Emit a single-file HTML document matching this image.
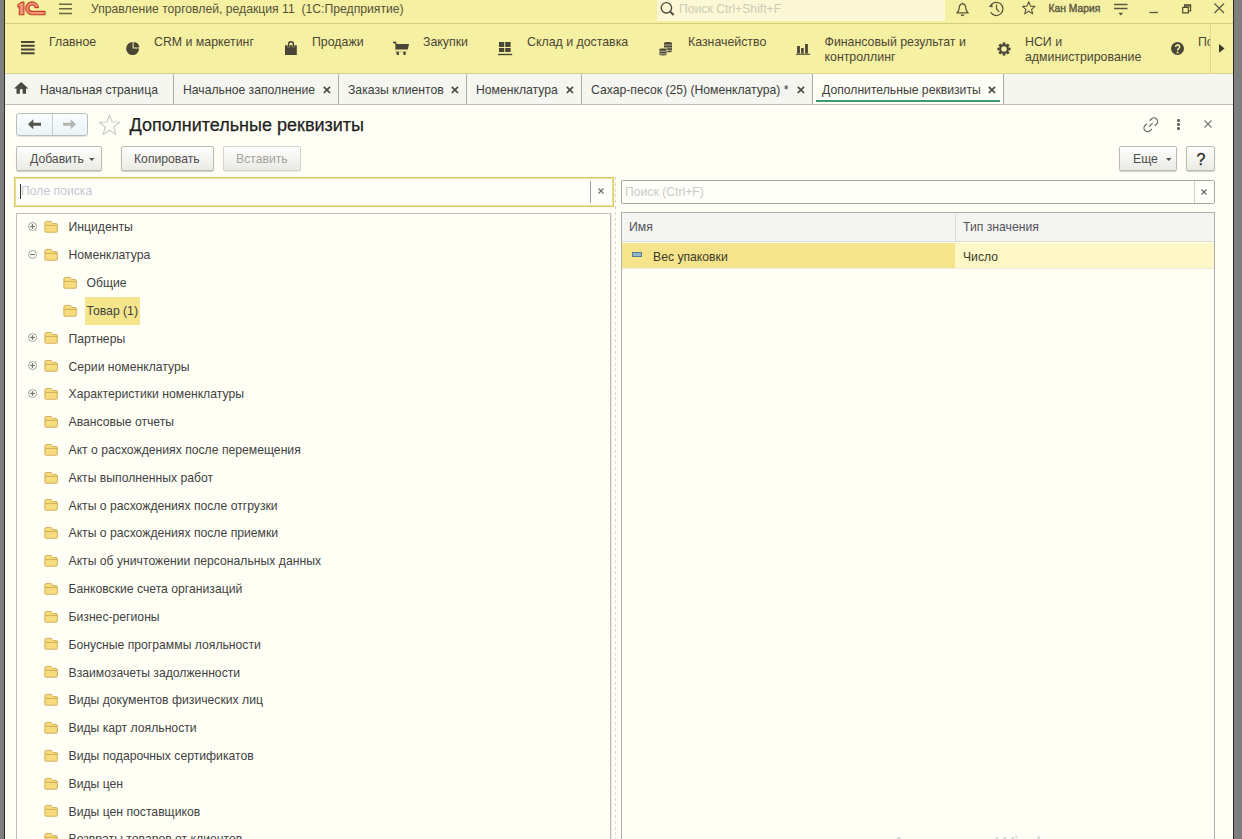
<!DOCTYPE html>
<html><head><meta charset="utf-8">
<style>
*{margin:0;padding:0;box-sizing:border-box}
html,body{width:1242px;height:839px;overflow:hidden;background:#7f7f7f;font-family:"Liberation Sans",sans-serif;font-size:12.2px;color:#333}
.a{position:absolute;white-space:nowrap}
svg.a{overflow:visible}
#win{position:absolute;left:4px;top:0;width:1230px;height:839px;background:#fffff6;border-left:1px solid #2b2b2b;border-right:1px solid #2b2b2b;overflow:hidden}
#title{position:absolute;left:0;top:0;width:1228px;height:24px;background:#f6f0a2;border-bottom:1px solid #d6cd7c}
#sect{position:absolute;left:0;top:24px;width:1228px;height:50px;background:#f6f0a2;border-bottom:1px solid #ddd28e}
#tabs{position:absolute;left:0;top:74px;width:1228px;height:31px;background:#f5f6ef;border-bottom:1px solid #bdbdb5}
.tab{position:absolute;top:0;height:30px;border-right:1px solid #aeaea6}
.tt{position:absolute;top:8.5px;color:#3c3c3c}
.st{position:absolute;color:#4a4636;line-height:15px;font-size:12.35px}
.btn{position:absolute;height:25px;border:1px solid #bdbdb5;border-radius:2px;background:linear-gradient(#fefefc,#ebebe5);box-shadow:0 1px 1px rgba(0,0,0,.2);color:#4d4d4d}
.btn span{position:absolute;top:5px}
.ti{position:absolute;color:#424242}
.ic{fill:#4a4636}
</style></head><body>
<div id="win">
  <div id="title">
    <!-- 1C logo -->
    <svg class="a" style="left:12px;top:1px" width="30" height="16" viewBox="0 0 30 16">
      <path d="M0.9 3.6 L4.6 1.1 H6.9 V13.7 H2.3 V5.5 L0.9 6 Z" fill="#f09478" stroke="#c23d24" stroke-width="1.1" stroke-linejoin="round"/>
      <path d="M21.4 6.6 A6.4 6.4 0 1 0 15 13.7 H28 V10.4 H15 A3.2 3.2 0 1 1 18.2 6.6 Z" fill="#f09478" stroke="#c23d24" stroke-width="1.1" stroke-linejoin="round"/>
    </svg>
    <!-- hamburger -->
    <svg class="a" style="left:54px;top:3px" width="14" height="12" viewBox="0 0 14 12">
      <path d="M0 1.2 H13 M0 5.7 H13 M0 10.5 H13" stroke="#6a6840" stroke-width="1.5"/>
    </svg>
    <div class="a" style="left:86px;top:2px;color:#55533a">Управление торговлей, редакция 11&nbsp; (1С:Предприятие)</div>
    <div class="a" style="left:652px;top:0;width:288px;height:21px;background:#fcf8d6"></div>
    <svg class="a" style="left:655px;top:1px" width="16" height="16" viewBox="0 0 16 16">
      <circle cx="6.4" cy="6.8" r="5.2" fill="none" stroke="#4c4a3c" stroke-width="1.4"/>
      <path d="M10.2 10.6 L13.6 14" stroke="#4c4a3c" stroke-width="2"/>
    </svg>
    <div class="a" style="left:674px;top:2px;color:#cdccb4">Поиск Ctrl+Shift+F</div>
    <!-- bell -->
    <svg class="a" style="left:951px;top:2px" width="15" height="15" viewBox="0 0 15 15">
      <path d="M6.5 0.6 V1.6" stroke="#5a5840" stroke-width="1.4"/>
      <path d="M6.5 1.8 C4 1.8 3.3 3.8 3.2 6 C3.1 8.2 2.4 9.6 0.8 10.9 H12.2 C10.6 9.6 9.9 8.2 9.8 6 C9.7 3.8 9 1.8 6.5 1.8 Z" fill="none" stroke="#5a5840" stroke-width="1.3" stroke-linejoin="round"/>
      <path d="M4.6 12.6 H8.4 A1.9 1.6 0 0 1 4.6 12.6 Z" fill="#5a5840"/>
    </svg>
    <!-- history -->
    <svg class="a" style="left:983px;top:0.5px" width="17" height="16" viewBox="0 0 17 16">
      <path d="M2.6 4.6 A6.6 6.6 0 1 1 2.7 11.4" fill="none" stroke="#5a5840" stroke-width="1.3"/>
      <path d="M0.6 5.6 L4.2 2.6 L4.6 6.6 Z" fill="#5a5840"/>
      <path d="M8.5 3.6 V7.9 L11.4 10.8" fill="none" stroke="#5a5840" stroke-width="1.2"/>
    </svg>
    <!-- star -->
    <svg class="a" style="left:1016.5px;top:1.2px" width="14" height="14" viewBox="0 0 15 15">
      <path d="M7.2 0.8 L9.1 5.5 L13.9 5.7 L10.2 8.9 L11.5 13.8 L7.2 11 L2.9 13.8 L4.2 8.9 L0.5 5.7 L5.3 5.5 Z" fill="none" stroke="#5a5840" stroke-width="1.2" stroke-linejoin="round"/>
    </svg>
    <div class="a" style="left:1043.5px;top:2.5px;font-size:10.3px;color:#5c5a44;-webkit-text-stroke:0.4px #5c5a44">Кан Мария</div>
    <!-- filter -->
    <svg class="a" style="left:1109px;top:2px" width="15" height="15" viewBox="0 0 15 15">
      <path d="M0 2.5 H13.5 M0 6.5 H13.5" stroke="#5a5840" stroke-width="1.3"/>
      <path d="M4.3 10.8 H9.2 L6.75 13.6 Z" fill="#5a5840"/>
    </svg>
    <svg class="a" style="left:1144px;top:11px" width="10" height="3" viewBox="0 0 10 3"><path d="M0.5 1.5 H9" stroke="#5a5840" stroke-width="1.3"/></svg>
    <svg class="a" style="left:1177px;top:3.5px" width="10" height="10" viewBox="0 0 10 10">
      <path d="M2.6 0.9 H8.6 V3.4 H2.6 Z" fill="#8a8660"/>
      <path d="M0.7 3.3 H6.3 V8.9 H0.7 Z" fill="none" stroke="#4f4c30" stroke-width="1.2"/>
      <path d="M2.6 3.3 V0.9 H8.6 V6.9 H6.3" fill="none" stroke="#4f4c30" stroke-width="1.2"/>
    </svg>
    <svg class="a" style="left:1209px;top:3px" width="11" height="11" viewBox="0 0 11 11"><path d="M0.5 0.5 L10 10 M10 0.5 L0.5 10" stroke="#5a5840" stroke-width="1.2"/></svg>
  </div>
  <div id="sect">
    <svg class="a" style="left:16px;top:17px" width="14" height="14" viewBox="0 0 14 14"><path d="M0 1 H13.6 M0 4.7 H13.6 M0 8.6 H13.6 M0 12.3 H13.6" stroke="#4a4636" stroke-width="2"/></svg>
    <div class="st" style="left:44px;top:11px">Главное</div>
    <svg class="a" style="left:121px;top:18px" width="14" height="14" viewBox="0 0 14 14">
      <path d="M6.6 0.1 A6.5 6.5 0 1 0 13.1 6.6 H6.6 Z" class="ic"/>
      <path d="M7.6 0 A6.3 6.3 0 0 1 13.4 5.6 H7.6 Z" class="ic"/>
    </svg>
    <div class="st" style="left:149px;top:11px">CRM и маркетинг</div>
    <svg class="a" style="left:280px;top:17px" width="13" height="15" viewBox="0 0 13 15">
      <path d="M3.6 6 V3.2 A2.4 2.4 0 0 1 8.4 3.2 V6" fill="none" stroke="#4a4636" stroke-width="1.5"/>
      <path d="M0 4.2 H2.6 V6.3 H4.6 V4.2 H7.4 V6.3 H9.4 V4.2 H11.8 V14 H0 Z" class="ic"/>
    </svg>
    <div class="st" style="left:307px;top:11px">Продажи</div>
    <svg class="a" style="left:388px;top:18px" width="17" height="14" viewBox="0 0 17 14">
      <path d="M0 0.6 H2.6 V2.2" fill="none" stroke="#4a4636" stroke-width="1.5"/>
      <path d="M2.4 1.9 H16 L14.8 7.6 H2.4 Z" class="ic"/>
      <path d="M3.4 9.8 H6 L5.8 13 H3.7 Z M10.2 9.8 H12.8 L12.6 13 H10.5 Z" class="ic"/>
      <path d="M2.5 7.6 V9.8 H13.6" fill="none" stroke="#4a4636" stroke-width="0.6" opacity=".4"/>
    </svg>
    <div class="st" style="left:418px;top:11px">Закупки</div>
    <svg class="a" style="left:493px;top:18px" width="15" height="14" viewBox="0 0 15 14">
      <path d="M1 0 H6.2 V5 H1 Z M7.2 0 H12.6 V5 H7.2 Z M1 6 H6.2 V10 H1 Z M7.2 6 H12.6 V10 H7.2 Z" class="ic"/>
      <path d="M0 11.8 H14.2 V13.2 H0 Z" class="ic"/>
    </svg>
    <div class="st" style="left:522px;top:11px">Склад и доставка</div>
    <svg class="a" style="left:654px;top:17px" width="15" height="16" viewBox="0 0 15 16">
      <g>
        <path d="M5 2.3 A4 1.3 0 0 1 13 2.3 V10 A4 1.3 0 0 1 5 10 Z" fill="#4a4636"/>
        <path d="M5.2 4 H12.8 M5.2 6.8 H12.8 M5.2 9.4 H12.8" stroke="#c9c4a0" stroke-width="0.9"/>
        <path d="M0 8.3 A4 1.3 0 0 1 8 8.3 V13.6 A4 1.3 0 0 1 0 13.6 Z" fill="#4a4636" stroke="#f6f0a2" stroke-width="0.8"/>
        <path d="M0.3 10.2 H7.7 M0.3 12.8 H7.7" stroke="#c9c4a0" stroke-width="0.9"/>
      </g>
    </svg>
    <div class="st" style="left:683px;top:11px">Казначейство</div>
    <svg class="a" style="left:791px;top:20px" width="15" height="12" viewBox="0 0 15 12">
      <path d="M1.1 2 H3.9 V9.5 H1.1 Z M5.1 4 H7.7 V9.5 H5.1 Z M9.1 0 H11.9 V9.5 H9.1 Z" class="ic"/>
      <path d="M0 9.6 H14 V11 H0 Z" class="ic" opacity=".8"/>
    </svg>
    <div class="st" style="left:819.5px;top:10.5px">Финансовый результат и<br>контроллинг</div>
    <svg class="a" style="left:992px;top:18px" width="14" height="14" viewBox="-7 -7 14 14">
      <g class="ic">
        <path d="M-1.3 -6.6 H1.3 V-4.6 H-1.3 Z" transform="rotate(0)"/>
        <path d="M-1.3 -6.6 H1.3 V-4.6 H-1.3 Z" transform="rotate(45)"/>
        <path d="M-1.3 -6.6 H1.3 V-4.6 H-1.3 Z" transform="rotate(90)"/>
        <path d="M-1.3 -6.6 H1.3 V-4.6 H-1.3 Z" transform="rotate(135)"/>
        <path d="M-1.3 -6.6 H1.3 V-4.6 H-1.3 Z" transform="rotate(180)"/>
        <path d="M-1.3 -6.6 H1.3 V-4.6 H-1.3 Z" transform="rotate(225)"/>
        <path d="M-1.3 -6.6 H1.3 V-4.6 H-1.3 Z" transform="rotate(270)"/>
        <path d="M-1.3 -6.6 H1.3 V-4.6 H-1.3 Z" transform="rotate(315)"/>
      </g>
      <circle cx="0" cy="0" r="3.9" fill="none" stroke="#4a4636" stroke-width="2.2"/>
    </svg>
    <div class="st" style="left:1020px;top:10.5px">НСИ и<br>администрирование</div>
    <svg class="a" style="left:1166px;top:18px" width="14" height="14" viewBox="0 0 14 14">
      <circle cx="6.5" cy="6.5" r="6.5" fill="#4a4636"/>
      <path d="M4.6 5 A2 2 0 1 1 7.6 6.6 C6.8 7.1 6.6 7.5 6.6 8.6" fill="none" stroke="#f6f0a2" stroke-width="1.6"/>
      <circle cx="6.6" cy="10.4" r="1" fill="#f6f0a2"/>
    </svg>
    <div class="a" style="left:1170px;top:0;width:35px;height:51px;overflow:hidden"><div class="st" style="left:23px;top:11px">Подключаемое</div></div>
    <div class="a" style="left:1205px;top:0;width:1px;height:51px;background:#e0d68c"></div>
    <svg class="a" style="left:1214px;top:20px" width="6" height="9" viewBox="0 0 6 9"><path d="M0 0 L5.5 4.4 L0 8.8 Z" fill="#3a3828"/></svg>
  </div>
  <div id="tabs">
    <div class="tab" style="left:0;width:169px"><div class="tt" style="left:35px">Начальная страница</div>
      <svg class="a" style="left:9px;top:8px" width="15" height="12" viewBox="0 0 15 12"><path d="M7.2 0 L14.4 6.6 H12 V11.8 H8.6 V7.2 H5.9 V11.8 H2.5 V6.6 H0 Z" fill="#4a4a44"/></svg>
    </div>
    <div class="tab" style="left:169px;width:165px"><div class="tt" style="left:9px">Начальное заполнение</div><svg class="a" style="left:149px;top:12px" width="8" height="8" viewBox="0 0 8 8"><path d="M0.8 0.8 L7 7 M7 0.8 L0.8 7" stroke="#4a4a44" stroke-width="1.7"/></svg></div>
    <div class="tab" style="left:334px;width:128px"><div class="tt" style="left:9px">Заказы клиентов</div><svg class="a" style="left:112px;top:12px" width="8" height="8" viewBox="0 0 8 8"><path d="M0.8 0.8 L7 7 M7 0.8 L0.8 7" stroke="#4a4a44" stroke-width="1.7"/></svg></div>
    <div class="tab" style="left:462px;width:115px"><div class="tt" style="left:9px">Номенклатура</div><svg class="a" style="left:99px;top:12px" width="8" height="8" viewBox="0 0 8 8"><path d="M0.8 0.8 L7 7 M7 0.8 L0.8 7" stroke="#4a4a44" stroke-width="1.7"/></svg></div>
    <div class="tab" style="left:577px;width:231px"><div class="tt" style="left:9px">Сахар-песок (25) (Номенклатура) *</div><svg class="a" style="left:215px;top:12px" width="8" height="8" viewBox="0 0 8 8"><path d="M0.8 0.8 L7 7 M7 0.8 L0.8 7" stroke="#4a4a44" stroke-width="1.7"/></svg></div>
    <div class="tab" style="left:808px;width:191px;background:#fffff6"><div class="tt" style="left:9px">Дополнительные реквизиты</div><svg class="a" style="left:175px;top:12px" width="8" height="8" viewBox="0 0 8 8"><path d="M0.8 0.8 L7 7 M7 0.8 L0.8 7" stroke="#4a4a44" stroke-width="1.7"/></svg>
      <div class="a" style="left:3px;top:26px;width:184px;height:2px;background:#3f9878"></div>
    </div>
  </div>

  <!-- content header -->
  <div class="a" style="left:11px;top:113px;width:72px;height:23px;border:1px solid #b9bdbc;border-radius:3px;background:linear-gradient(#fbfdfd,#e9f4f8);box-shadow:0 1px 1px rgba(0,0,0,.12)"></div>
  <div class="a" style="left:47px;top:114px;width:1px;height:21px;background:#c8cccc"></div>
  <svg class="a" style="left:23px;top:119px" width="14" height="11" viewBox="0 0 14 11"><path d="M0 5.3 L5.3 0.3 V3.8 H13 V6.8 H5.3 V10.3 Z" fill="#4f544c"/></svg>
  <svg class="a" style="left:57px;top:119px" width="14" height="11" viewBox="0 0 14 11"><path d="M14 5.3 L8.7 0.3 V3.8 H1 V6.8 H8.7 V10.3 Z" fill="#b3b7b2"/></svg>
  <svg class="a" style="left:93px;top:114px" width="23" height="22" viewBox="0 0 23 22">
    <path d="M11.5 1 L14.2 8 L21.8 8.3 L15.8 13 L17.9 20.5 L11.5 16.2 L5.1 20.5 L7.2 13 L1.2 8.3 L8.8 8 Z" fill="none" stroke="#c5cdcd" stroke-width="1.1" stroke-linejoin="round"/>
  </svg>
  <div class="a" style="left:124.5px;top:115px;font-size:18px;color:#1e1e1e;-webkit-text-stroke:0.25px #1e1e1e">Дополнительные реквизиты</div>
  <svg class="a" style="left:1137.5px;top:117px" width="16" height="16" viewBox="0 0 16 16">
    <path d="M6.65 3.75 L8.45 1.95 A3.6 3.6 0 0 1 13.55 7.05 L11.75 8.85" fill="none" stroke="#6f6f6f" stroke-width="1.3"/>
    <path d="M3.85 6.75 L2.05 8.55 A3.6 3.6 0 0 0 7.15 13.65 L8.95 11.85" fill="none" stroke="#6f6f6f" stroke-width="1.3"/>
    <path d="M6.1 9.9 L9.6 6.1" stroke="#6f6f6f" stroke-width="1.3"/>
  </svg>
  <div class="a" style="left:1172px;top:119px;width:2.6px;height:2.6px;border-radius:50%;background:#666"></div>
  <div class="a" style="left:1172px;top:123px;width:2.6px;height:2.6px;border-radius:50%;background:#666"></div>
  <div class="a" style="left:1172px;top:127px;width:2.6px;height:2.6px;border-radius:50%;background:#666"></div>
  <svg class="a" style="left:1199px;top:120px" width="8" height="8" viewBox="0 0 8 8"><path d="M0.5 0.5 L7.5 7.5 M7.5 0.5 L0.5 7.5" stroke="#777" stroke-width="1.1"/></svg>

  <!-- buttons -->
  <div class="btn" style="left:11px;top:146px;width:86px"><span style="left:13px">Добавить</span><svg class="a" style="left:72px;top:11px" width="6" height="4" viewBox="0 0 6 4"><path d="M0 0 H5.5 L2.75 3 Z" fill="#555"/></svg></div>
  <div class="btn" style="left:116px;top:146px;width:93px"><span style="left:12px">Копировать</span></div>
  <div class="btn" style="left:218px;top:146px;width:78px;color:#a3a3a0;border-color:#d4d4cc;box-shadow:0 1px 1px rgba(0,0,0,.08)"><span style="left:12px">Вставить</span></div>
  <div class="btn" style="left:1114px;top:146px;width:58px"><span style="left:13px">Еще</span><svg class="a" style="left:46px;top:11px" width="6" height="4" viewBox="0 0 6 4"><path d="M0 0 H5.5 L2.75 3 Z" fill="#555"/></svg></div>
  <div class="btn" style="left:1181px;top:146px;width:29px"><span style="left:9.5px;top:3.5px;font-size:16px;color:#2a2a2a;-webkit-text-stroke:0.3px #2a2a2a">?</span></div>

  <!-- left search -->
  <div class="a" style="left:9px;top:177px;width:600px;height:30px;border:1px solid #dbcb62;box-shadow:inset 0 0 0 1px #ebe096;background:#fffffa"></div>
  <div class="a" style="left:15px;top:184px;width:1px;height:15px;background:#333"></div>
  <div class="a" style="left:16px;top:184px;color:#c9c5d3">Поле поиска</div>
  <div class="a" style="left:585px;top:181px;width:1px;height:22px;background:#9c9c98"></div>
  <svg class="a" style="left:593px;top:188px" width="6" height="6" viewBox="0 0 6 6"><path d="M0.5 0.5 L5.5 5.5 M5.5 0.5 L0.5 5.5" stroke="#6a6a6a" stroke-width="1.1"/></svg>
  <!-- right search -->
  <div class="a" style="left:616px;top:180px;width:594px;height:24px;border:1px solid #a9a9a2;border-radius:2px;background:#fffffa"></div>
  <div class="a" style="left:620px;top:185px;color:#cbcbc5">Поиск (Ctrl+F)</div>
  <div class="a" style="left:1189px;top:181px;width:1px;height:22px;background:#cfcfc8"></div>
  <svg class="a" style="left:1196px;top:189px" width="6" height="6" viewBox="0 0 6 6"><path d="M0.5 0.5 L5.5 5.5 M5.5 0.5 L0.5 5.5" stroke="#666" stroke-width="1.1"/></svg>

  <!-- splitter -->
  <div class="a" style="left:610px;top:177px;width:1px;height:663px;background:repeating-linear-gradient(#d8d8d0 0 3px,transparent 3px 5.8px)"></div>

  <!-- tree box -->
  <div class="a" style="left:11px;top:213px;width:595px;height:640px;border:1px solid #c0c0b8;box-shadow:1px 1px 0 #e6e6de;background:#fffff6"></div>
  <svg class="a" style="left:23px;top:222.0px" width="10" height="10" viewBox="0 0 10 10"><circle cx="4.5" cy="4.5" r="4" fill="none" stroke="#a3a3a0" stroke-width="1"/><path d="M2.1 4.5 H6.9" stroke="#777" stroke-width="1.2"/><path d="M4.5 2.1 V6.9" stroke="#777" stroke-width="1.2"/></svg>
<svg class="a" style="left:38px;top:220.1px" width="16" height="14" viewBox="0 0 16 14"><path d="M1.9 3 Q1.9 1.4 3.5 1.4 H7.3 Q8.4 1.4 9.2 2.5 Q9.8 3.6 10.9 3.6 H13.3 Q14.3 3.6 14.3 4.6 V11.2 Q14.3 12.2 13.3 12.2 H2.9 Q1.9 12.2 1.9 11.2 Z" fill="#f7dc7e" stroke="#cfad5c" stroke-width="1"/><path d="M2.2 5.4 H14" stroke="#d2ae58" stroke-width="1"/></svg>
<div class="ti a" style="left:63.5px;top:220.4px">Инциденты</div>
<svg class="a" style="left:23px;top:250.0px" width="10" height="10" viewBox="0 0 10 10"><circle cx="4.5" cy="4.5" r="4" fill="none" stroke="#a3a3a0" stroke-width="1"/><path d="M2.1 4.5 H6.9" stroke="#777" stroke-width="1.2"/></svg>
<svg class="a" style="left:38px;top:247.9px" width="16" height="14" viewBox="0 0 16 14"><path d="M1.9 3 Q1.9 1.4 3.5 1.4 H7.3 Q8.4 1.4 9.2 2.5 Q9.8 3.6 10.9 3.6 H13.3 Q14.3 3.6 14.3 4.6 V11.2 Q14.3 12.2 13.3 12.2 H2.9 Q1.9 12.2 1.9 11.2 Z" fill="#f7dc7e" stroke="#cfad5c" stroke-width="1"/><path d="M2.2 5.4 H14" stroke="#d2ae58" stroke-width="1"/></svg>
<div class="ti a" style="left:63.5px;top:248.2px">Номенклатура</div>
<svg class="a" style="left:56.5px;top:275.7px" width="16" height="14" viewBox="0 0 16 14"><path d="M1.9 3 Q1.9 1.4 3.5 1.4 H7.3 Q8.4 1.4 9.2 2.5 Q9.8 3.6 10.9 3.6 H13.3 Q14.3 3.6 14.3 4.6 V11.2 Q14.3 12.2 13.3 12.2 H2.9 Q1.9 12.2 1.9 11.2 Z" fill="#f7dc7e" stroke="#cfad5c" stroke-width="1"/><path d="M2.2 5.4 H14" stroke="#d2ae58" stroke-width="1"/></svg>
<div class="ti a" style="left:81.5px;top:276.0px">Общие</div>
<svg class="a" style="left:56.5px;top:303.6px" width="16" height="14" viewBox="0 0 16 14"><path d="M1.9 3 Q1.9 1.4 3.5 1.4 H7.3 Q8.4 1.4 9.2 2.5 Q9.8 3.6 10.9 3.6 H13.3 Q14.3 3.6 14.3 4.6 V11.2 Q14.3 12.2 13.3 12.2 H2.9 Q1.9 12.2 1.9 11.2 Z" fill="#f7dc7e" stroke="#cfad5c" stroke-width="1"/><path d="M2.2 5.4 H14" stroke="#d2ae58" stroke-width="1"/></svg>
<div class="a" style="left:80px;top:297.2px;width:55px;height:27.5px;background:#f5e68c"></div>
<div class="ti a" style="left:81.5px;top:303.9px">Товар (1)</div>
<svg class="a" style="left:23px;top:333.0px" width="10" height="10" viewBox="0 0 10 10"><circle cx="4.5" cy="4.5" r="4" fill="none" stroke="#a3a3a0" stroke-width="1"/><path d="M2.1 4.5 H6.9" stroke="#777" stroke-width="1.2"/><path d="M4.5 2.1 V6.9" stroke="#777" stroke-width="1.2"/></svg>
<svg class="a" style="left:38px;top:331.4px" width="16" height="14" viewBox="0 0 16 14"><path d="M1.9 3 Q1.9 1.4 3.5 1.4 H7.3 Q8.4 1.4 9.2 2.5 Q9.8 3.6 10.9 3.6 H13.3 Q14.3 3.6 14.3 4.6 V11.2 Q14.3 12.2 13.3 12.2 H2.9 Q1.9 12.2 1.9 11.2 Z" fill="#f7dc7e" stroke="#cfad5c" stroke-width="1"/><path d="M2.2 5.4 H14" stroke="#d2ae58" stroke-width="1"/></svg>
<div class="ti a" style="left:63.5px;top:331.7px">Партнеры</div>
<svg class="a" style="left:23px;top:361.0px" width="10" height="10" viewBox="0 0 10 10"><circle cx="4.5" cy="4.5" r="4" fill="none" stroke="#a3a3a0" stroke-width="1"/><path d="M2.1 4.5 H6.9" stroke="#777" stroke-width="1.2"/><path d="M4.5 2.1 V6.9" stroke="#777" stroke-width="1.2"/></svg>
<svg class="a" style="left:38px;top:359.2px" width="16" height="14" viewBox="0 0 16 14"><path d="M1.9 3 Q1.9 1.4 3.5 1.4 H7.3 Q8.4 1.4 9.2 2.5 Q9.8 3.6 10.9 3.6 H13.3 Q14.3 3.6 14.3 4.6 V11.2 Q14.3 12.2 13.3 12.2 H2.9 Q1.9 12.2 1.9 11.2 Z" fill="#f7dc7e" stroke="#cfad5c" stroke-width="1"/><path d="M2.2 5.4 H14" stroke="#d2ae58" stroke-width="1"/></svg>
<div class="ti a" style="left:63.5px;top:359.5px">Серии номенклатуры</div>
<svg class="a" style="left:23px;top:389.0px" width="10" height="10" viewBox="0 0 10 10"><circle cx="4.5" cy="4.5" r="4" fill="none" stroke="#a3a3a0" stroke-width="1"/><path d="M2.1 4.5 H6.9" stroke="#777" stroke-width="1.2"/><path d="M4.5 2.1 V6.9" stroke="#777" stroke-width="1.2"/></svg>
<svg class="a" style="left:38px;top:387.0px" width="16" height="14" viewBox="0 0 16 14"><path d="M1.9 3 Q1.9 1.4 3.5 1.4 H7.3 Q8.4 1.4 9.2 2.5 Q9.8 3.6 10.9 3.6 H13.3 Q14.3 3.6 14.3 4.6 V11.2 Q14.3 12.2 13.3 12.2 H2.9 Q1.9 12.2 1.9 11.2 Z" fill="#f7dc7e" stroke="#cfad5c" stroke-width="1"/><path d="M2.2 5.4 H14" stroke="#d2ae58" stroke-width="1"/></svg>
<div class="ti a" style="left:63.5px;top:387.3px">Характеристики номенклатуры</div>
<svg class="a" style="left:38px;top:414.8px" width="16" height="14" viewBox="0 0 16 14"><path d="M1.9 3 Q1.9 1.4 3.5 1.4 H7.3 Q8.4 1.4 9.2 2.5 Q9.8 3.6 10.9 3.6 H13.3 Q14.3 3.6 14.3 4.6 V11.2 Q14.3 12.2 13.3 12.2 H2.9 Q1.9 12.2 1.9 11.2 Z" fill="#f7dc7e" stroke="#cfad5c" stroke-width="1"/><path d="M2.2 5.4 H14" stroke="#d2ae58" stroke-width="1"/></svg>
<div class="ti a" style="left:63.5px;top:415.1px">Авансовые отчеты</div>
<svg class="a" style="left:38px;top:442.7px" width="16" height="14" viewBox="0 0 16 14"><path d="M1.9 3 Q1.9 1.4 3.5 1.4 H7.3 Q8.4 1.4 9.2 2.5 Q9.8 3.6 10.9 3.6 H13.3 Q14.3 3.6 14.3 4.6 V11.2 Q14.3 12.2 13.3 12.2 H2.9 Q1.9 12.2 1.9 11.2 Z" fill="#f7dc7e" stroke="#cfad5c" stroke-width="1"/><path d="M2.2 5.4 H14" stroke="#d2ae58" stroke-width="1"/></svg>
<div class="ti a" style="left:63.5px;top:443.0px">Акт о расхождениях после перемещения</div>
<svg class="a" style="left:38px;top:470.5px" width="16" height="14" viewBox="0 0 16 14"><path d="M1.9 3 Q1.9 1.4 3.5 1.4 H7.3 Q8.4 1.4 9.2 2.5 Q9.8 3.6 10.9 3.6 H13.3 Q14.3 3.6 14.3 4.6 V11.2 Q14.3 12.2 13.3 12.2 H2.9 Q1.9 12.2 1.9 11.2 Z" fill="#f7dc7e" stroke="#cfad5c" stroke-width="1"/><path d="M2.2 5.4 H14" stroke="#d2ae58" stroke-width="1"/></svg>
<div class="ti a" style="left:63.5px;top:470.8px">Акты выполненных работ</div>
<svg class="a" style="left:38px;top:498.3px" width="16" height="14" viewBox="0 0 16 14"><path d="M1.9 3 Q1.9 1.4 3.5 1.4 H7.3 Q8.4 1.4 9.2 2.5 Q9.8 3.6 10.9 3.6 H13.3 Q14.3 3.6 14.3 4.6 V11.2 Q14.3 12.2 13.3 12.2 H2.9 Q1.9 12.2 1.9 11.2 Z" fill="#f7dc7e" stroke="#cfad5c" stroke-width="1"/><path d="M2.2 5.4 H14" stroke="#d2ae58" stroke-width="1"/></svg>
<div class="ti a" style="left:63.5px;top:498.6px">Акты о расхождениях после отгрузки</div>
<svg class="a" style="left:38px;top:526.1px" width="16" height="14" viewBox="0 0 16 14"><path d="M1.9 3 Q1.9 1.4 3.5 1.4 H7.3 Q8.4 1.4 9.2 2.5 Q9.8 3.6 10.9 3.6 H13.3 Q14.3 3.6 14.3 4.6 V11.2 Q14.3 12.2 13.3 12.2 H2.9 Q1.9 12.2 1.9 11.2 Z" fill="#f7dc7e" stroke="#cfad5c" stroke-width="1"/><path d="M2.2 5.4 H14" stroke="#d2ae58" stroke-width="1"/></svg>
<div class="ti a" style="left:63.5px;top:526.4px">Акты о расхождениях после приемки</div>
<svg class="a" style="left:38px;top:553.9px" width="16" height="14" viewBox="0 0 16 14"><path d="M1.9 3 Q1.9 1.4 3.5 1.4 H7.3 Q8.4 1.4 9.2 2.5 Q9.8 3.6 10.9 3.6 H13.3 Q14.3 3.6 14.3 4.6 V11.2 Q14.3 12.2 13.3 12.2 H2.9 Q1.9 12.2 1.9 11.2 Z" fill="#f7dc7e" stroke="#cfad5c" stroke-width="1"/><path d="M2.2 5.4 H14" stroke="#d2ae58" stroke-width="1"/></svg>
<div class="ti a" style="left:63.5px;top:554.2px">Акты об уничтожении персональных данных</div>
<svg class="a" style="left:38px;top:581.8px" width="16" height="14" viewBox="0 0 16 14"><path d="M1.9 3 Q1.9 1.4 3.5 1.4 H7.3 Q8.4 1.4 9.2 2.5 Q9.8 3.6 10.9 3.6 H13.3 Q14.3 3.6 14.3 4.6 V11.2 Q14.3 12.2 13.3 12.2 H2.9 Q1.9 12.2 1.9 11.2 Z" fill="#f7dc7e" stroke="#cfad5c" stroke-width="1"/><path d="M2.2 5.4 H14" stroke="#d2ae58" stroke-width="1"/></svg>
<div class="ti a" style="left:63.5px;top:582.1px">Банковские счета организаций</div>
<svg class="a" style="left:38px;top:609.6px" width="16" height="14" viewBox="0 0 16 14"><path d="M1.9 3 Q1.9 1.4 3.5 1.4 H7.3 Q8.4 1.4 9.2 2.5 Q9.8 3.6 10.9 3.6 H13.3 Q14.3 3.6 14.3 4.6 V11.2 Q14.3 12.2 13.3 12.2 H2.9 Q1.9 12.2 1.9 11.2 Z" fill="#f7dc7e" stroke="#cfad5c" stroke-width="1"/><path d="M2.2 5.4 H14" stroke="#d2ae58" stroke-width="1"/></svg>
<div class="ti a" style="left:63.5px;top:609.9px">Бизнес-регионы</div>
<svg class="a" style="left:38px;top:637.4px" width="16" height="14" viewBox="0 0 16 14"><path d="M1.9 3 Q1.9 1.4 3.5 1.4 H7.3 Q8.4 1.4 9.2 2.5 Q9.8 3.6 10.9 3.6 H13.3 Q14.3 3.6 14.3 4.6 V11.2 Q14.3 12.2 13.3 12.2 H2.9 Q1.9 12.2 1.9 11.2 Z" fill="#f7dc7e" stroke="#cfad5c" stroke-width="1"/><path d="M2.2 5.4 H14" stroke="#d2ae58" stroke-width="1"/></svg>
<div class="ti a" style="left:63.5px;top:637.7px">Бонусные программы лояльности</div>
<svg class="a" style="left:38px;top:665.2px" width="16" height="14" viewBox="0 0 16 14"><path d="M1.9 3 Q1.9 1.4 3.5 1.4 H7.3 Q8.4 1.4 9.2 2.5 Q9.8 3.6 10.9 3.6 H13.3 Q14.3 3.6 14.3 4.6 V11.2 Q14.3 12.2 13.3 12.2 H2.9 Q1.9 12.2 1.9 11.2 Z" fill="#f7dc7e" stroke="#cfad5c" stroke-width="1"/><path d="M2.2 5.4 H14" stroke="#d2ae58" stroke-width="1"/></svg>
<div class="ti a" style="left:63.5px;top:665.5px">Взаимозачеты задолженности</div>
<svg class="a" style="left:38px;top:693.0px" width="16" height="14" viewBox="0 0 16 14"><path d="M1.9 3 Q1.9 1.4 3.5 1.4 H7.3 Q8.4 1.4 9.2 2.5 Q9.8 3.6 10.9 3.6 H13.3 Q14.3 3.6 14.3 4.6 V11.2 Q14.3 12.2 13.3 12.2 H2.9 Q1.9 12.2 1.9 11.2 Z" fill="#f7dc7e" stroke="#cfad5c" stroke-width="1"/><path d="M2.2 5.4 H14" stroke="#d2ae58" stroke-width="1"/></svg>
<div class="ti a" style="left:63.5px;top:693.3px">Виды документов физических лиц</div>
<svg class="a" style="left:38px;top:720.9px" width="16" height="14" viewBox="0 0 16 14"><path d="M1.9 3 Q1.9 1.4 3.5 1.4 H7.3 Q8.4 1.4 9.2 2.5 Q9.8 3.6 10.9 3.6 H13.3 Q14.3 3.6 14.3 4.6 V11.2 Q14.3 12.2 13.3 12.2 H2.9 Q1.9 12.2 1.9 11.2 Z" fill="#f7dc7e" stroke="#cfad5c" stroke-width="1"/><path d="M2.2 5.4 H14" stroke="#d2ae58" stroke-width="1"/></svg>
<div class="ti a" style="left:63.5px;top:721.2px">Виды карт лояльности</div>
<svg class="a" style="left:38px;top:748.7px" width="16" height="14" viewBox="0 0 16 14"><path d="M1.9 3 Q1.9 1.4 3.5 1.4 H7.3 Q8.4 1.4 9.2 2.5 Q9.8 3.6 10.9 3.6 H13.3 Q14.3 3.6 14.3 4.6 V11.2 Q14.3 12.2 13.3 12.2 H2.9 Q1.9 12.2 1.9 11.2 Z" fill="#f7dc7e" stroke="#cfad5c" stroke-width="1"/><path d="M2.2 5.4 H14" stroke="#d2ae58" stroke-width="1"/></svg>
<div class="ti a" style="left:63.5px;top:749.0px">Виды подарочных сертификатов</div>
<svg class="a" style="left:38px;top:776.5px" width="16" height="14" viewBox="0 0 16 14"><path d="M1.9 3 Q1.9 1.4 3.5 1.4 H7.3 Q8.4 1.4 9.2 2.5 Q9.8 3.6 10.9 3.6 H13.3 Q14.3 3.6 14.3 4.6 V11.2 Q14.3 12.2 13.3 12.2 H2.9 Q1.9 12.2 1.9 11.2 Z" fill="#f7dc7e" stroke="#cfad5c" stroke-width="1"/><path d="M2.2 5.4 H14" stroke="#d2ae58" stroke-width="1"/></svg>
<div class="ti a" style="left:63.5px;top:776.8px">Виды цен</div>
<svg class="a" style="left:38px;top:804.3px" width="16" height="14" viewBox="0 0 16 14"><path d="M1.9 3 Q1.9 1.4 3.5 1.4 H7.3 Q8.4 1.4 9.2 2.5 Q9.8 3.6 10.9 3.6 H13.3 Q14.3 3.6 14.3 4.6 V11.2 Q14.3 12.2 13.3 12.2 H2.9 Q1.9 12.2 1.9 11.2 Z" fill="#f7dc7e" stroke="#cfad5c" stroke-width="1"/><path d="M2.2 5.4 H14" stroke="#d2ae58" stroke-width="1"/></svg>
<div class="ti a" style="left:63.5px;top:804.6px">Виды цен поставщиков</div>
<svg class="a" style="left:38px;top:832.1px" width="16" height="14" viewBox="0 0 16 14"><path d="M1.9 3 Q1.9 1.4 3.5 1.4 H7.3 Q8.4 1.4 9.2 2.5 Q9.8 3.6 10.9 3.6 H13.3 Q14.3 3.6 14.3 4.6 V11.2 Q14.3 12.2 13.3 12.2 H2.9 Q1.9 12.2 1.9 11.2 Z" fill="#f7dc7e" stroke="#cfad5c" stroke-width="1"/><path d="M2.2 5.4 H14" stroke="#d2ae58" stroke-width="1"/></svg>
<div class="ti a" style="left:63.5px;top:832.4px">Возвраты товаров от клиентов</div>

  <!-- table -->
  <div class="a" style="left:616px;top:212px;width:594px;height:640px;border:1px solid #b0b0a8;background:#fffff6"></div>
  <div class="a" style="left:617px;top:213px;width:592px;height:29px;background:#f4f5f0;border-bottom:1px solid #dcdcd4"></div>
  <div class="a" style="left:950px;top:213px;width:1px;height:29px;background:#dcdcd4"></div>
  <div class="a" style="left:624px;top:220px;color:#52525c">Имя</div>
  <div class="a" style="left:958px;top:220px;color:#52525c">Тип значения</div>
  <div class="a" style="left:617px;top:243px;width:333px;height:25px;background:#f6e48c"></div>
  <div class="a" style="left:950px;top:243px;width:259px;height:25px;background:#fdf8c6"></div>
  <div class="a" style="left:617px;top:268px;width:592px;height:1px;background:#ecebe2"></div>
  <div class="a" style="left:627px;top:252px;width:10px;height:5px;background:#8cb7cc;border:1px solid #5a7d90"></div>
  <div class="a" style="left:648px;top:249.5px;color:#3a3a2a">Вес упаковки</div>
  <div class="a" style="left:958px;top:249.5px;color:#3a3a2a">Число</div>

  <div class="a" style="left:887px;top:833px;font-size:20px;color:#cfcfca">Активация Windows</div>
</div>
</body></html>
